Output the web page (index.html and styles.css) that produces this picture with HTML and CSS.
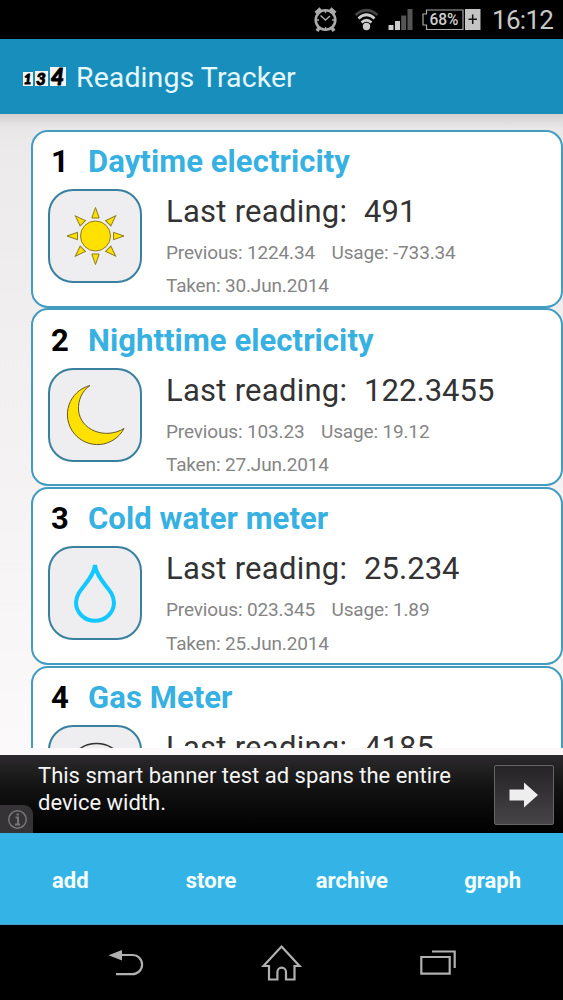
FILE: index.html
```
<!DOCTYPE html>
<html lang="en">

<head>
    <meta charset="UTF-8">
    <meta name="viewport" content="width=device-width, initial-scale=1.0">
    <title>Readings Tracker</title>
    <link rel="stylesheet" href="styles.css">
</head>

<body>

    <div class="status-bar">
        <svg class="status-icons" width="173" height="39" viewBox="0 0 173 39">
            <!-- alarm -->
            <g fill="none" stroke="#aaa">
                <circle cx="15.5" cy="20" r="9.8" stroke-width="2.6"/>
                <path d="M6 13.5L11 9M25 13.5L20 9" stroke-width="4.5"/>
                <path d="M9 28L7 31M22 28l2 3" stroke-width="3.5"/>
                <path d="M10.5 15.5l5 4.5 4.5-4M15.5 11v2M15.5 27v2M7 20h2M22 20h2" stroke-width="1.4"/>
            </g>
            <!-- wifi -->
            <g fill="none" stroke-width="2.7">
                <path d="M45.5 15Q56.5 5.5 67.5 15" stroke="#444"/>
                <path d="M48.5 18.5Q56.5 11 64.5 18.5" stroke="#ccc"/>
                <path d="M51.5 22.5Q56.5 18 61.5 22.5" stroke="#ccc"/>
            </g>
            <circle cx="56.5" cy="26.5" r="3.7" fill="#ccc"/>
            <!-- signal -->
            <path d="M78.5 25h5v5h-5zM85 21h5v9h-5z" fill="#ccc"/>
            <path d="M91.2 15.5h5V30h-5zM97.5 9h5v21h-5z" fill="#555"/>
            <!-- battery -->
            <path d="M116.5 10H153V29.5H116.5V25H113V14h3.5z" fill="none" stroke="#aaa" stroke-width="1.2"/>
            <path d="M155 9h15.5v21H155z" fill="#c4c4c4"/>
            <path d="M158.5 19.3h8.5M162.7 14.5v9.5" stroke="#111" stroke-width="1.5"/>
            <text class="battery-text" x="119.5" y="25" textLength="29" lengthAdjust="spacingAndGlyphs">68%</text>
        </svg>
        <span class="clock">16:12</span>
    </div>

    <header class="app-header">
        <div class="logo">
            <span class="digit digit-one">1</span>
            <span class="digit digit-three">3</span>
            <span class="digit digit-four">4</span>
        </div>
        <h1>Readings Tracker</h1>
    </header>

    <main class="meter-list">
        <section class="meter">
            <h2><span class="number">1</span>Daytime electricity</h2>
            <div class="meter-body">
                <div class="meter-icon">
                    <svg width="92" height="92" viewBox="0 0 92 92">
                        <g fill="#ffe100" stroke="#8c7c20" stroke-width="1">
                            <circle cx="46.5" cy="46" r="15"/>
                            <path id="ray" d="M46.5 17.5l3.7 10.5h-7.4z"/>
                            <use href="#ray" transform="rotate(45 46.5 46)"/>
                            <use href="#ray" transform="rotate(90 46.5 46)"/>
                            <use href="#ray" transform="rotate(135 46.5 46)"/>
                            <use href="#ray" transform="rotate(180 46.5 46)"/>
                            <use href="#ray" transform="rotate(225 46.5 46)"/>
                            <use href="#ray" transform="rotate(270 46.5 46)"/>
                            <use href="#ray" transform="rotate(315 46.5 46)"/>
                        </g>
                    </svg>
                </div>
                <div class="meter-info">
                    <p class="last"><span>Last reading:</span>491</p>
                    <p class="detail"><span>Previous: 1224.34</span>Usage: -733.34</p>
                    <p class="detail">Taken: 30.Jun.2014</p>
                </div>
            </div>
        </section>

        <section class="meter">
            <h2><span class="number">2</span>Nighttime electricity</h2>
            <div class="meter-body">
                <div class="meter-icon">
                    <svg width="92" height="92" viewBox="0 0 92 92">
                        <path d="M41 16.5A30 30 0 1 0 75 59.5C56 71 31 61 29.5 41C29 31 33 22 41 16.5z" fill="#ffe100" stroke="#66582a" stroke-width="1"/>
                    </svg>
                </div>
                <div class="meter-info">
                    <p class="last"><span>Last reading:</span>122.3455</p>
                    <p class="detail"><span>Previous: 103.23</span>Usage: 19.12</p>
                    <p class="detail">Taken: 27.Jun.2014</p>
                </div>
            </div>
        </section>

        <section class="meter">
            <h2><span class="number">3</span>Cold water meter</h2>
            <div class="meter-body">
                <div class="meter-icon">
                    <svg width="92" height="92" viewBox="0 0 92 92">
                        <path d="M46 18C44.5 34 27 42 27 55.5A19 18.3 0 0 0 65 55.5C65 42 47.5 34 46 18z" fill="none" stroke="#12c8ff" stroke-width="4"/>
                    </svg>
                </div>
                <div class="meter-info">
                    <p class="last"><span>Last reading:</span>25.234</p>
                    <p class="detail"><span>Previous: 023.345</span>Usage: 1.89</p>
                    <p class="detail">Taken: 25.Jun.2014</p>
                </div>
            </div>
        </section>

        <section class="meter">
            <h2><span class="number">4</span>Gas Meter</h2>
            <div class="meter-body">
                <div class="meter-icon">
                    <svg width="92" height="92" viewBox="0 0 92 92">
                        <ellipse cx="47.5" cy="38" rx="25" ry="20.5" fill="none" stroke="#333" stroke-width="1.5"/>
                    </svg>
                </div>
                <div class="meter-info">
                    <p class="last"><span>Last reading:</span>4185</p>
                </div>
            </div>
        </section>
    </main>

    <div class="ad">
        <p>This smart banner test ad spans the entire<br>device width.</p>
        <div class="ad-button">
            <svg width="58" height="58" viewBox="0 0 58 58">
                <path d="M14.5 23.5H29V16.5L43 29L29 41.5V34.5H14.5z" fill="#eee"/>
            </svg>
        </div>
        <div class="ad-info">
            <svg width="33" height="28" viewBox="0 0 33 28">
                <circle cx="17.5" cy="14.5" r="8.7" fill="none" stroke="#777" stroke-width="1.5"/>
                <path d="M15.5 12.5h2.5V19M15 19.5h5M16.5 9.5h2.5" fill="none" stroke="#777" stroke-width="2"/>
            </svg>
        </div>
    </div>

    <div class="actions">
        <button>add</button>
        <button>store</button>
        <button>archive</button>
        <button>graph</button>
    </div>

    <div class="nav-bar">
        <svg width="563" height="75" viewBox="0 0 563 75">
            <g fill="none" stroke="#b0b0b0" stroke-width="2.2">
                <path d="M121 30h11.5a9.6 9.6 0 0 1 0 19.2H116"/>
                <path d="M108.5 30.2L122 25v10.5z" fill="#b0b0b0" stroke="none"/>
                <path d="M281.5 21.5L299.5 41H294.5V54.5H286V47a4.3 4.3 0 0 0-8.6 0V54.5H269V41H263.5z"/>
                <path d="M421.3 32h28.4v16.7h-28.4zM432 26.5h22.7V43"/>
            </g>
        </svg>
    </div>

</body>

</html>
```
FILE: styles.css
```
* {
    box-sizing: border-box;
}

body {
    margin: 0;
    width: 563px;
    height: 1000px;
    overflow: hidden;
    display: flex;
    flex-direction: column;
    background-color: #fbf9fa;
    font-family: 'Roboto', sans-serif;
}

h1, h2, p {
    margin: 0;
}

svg {
    display: block;
}

.status-bar {
    flex: none;
    height: 39px;
    display: flex;
    padding-left: 310px;
    background-color: #000;
    color: #c8c8c8;
}

.clock {
    margin-left: 9px;
    font-size: 26px;
    line-height: 40px;
    letter-spacing: -0.7px;
    white-space: nowrap;
}

.battery-text {
    font-size: 16px;
    font-weight: 500;
    fill: #d0d0d0;
}

.app-header {
    flex: none;
    height: 75px;
    display: flex;
    align-items: center;
    padding-left: 23px;
    background-color: #188ebd;
}

.app-header h1 {
    margin: 2px 0 0 10px;
    color: #e4f8ff;
    font-size: 28.5px;
    font-weight: normal;
    letter-spacing: 0.08px;
    white-space: nowrap;
}

.logo {
    width: 43px;
    display: flex;
    gap: 2px;
    align-items: flex-end;
}

.digit {
    background-color: #f4f4f4;
    color: #000;
    font-family: 'Lato', sans-serif;
    font-style: italic;
    font-weight: 900;
    text-align: center;
    text-indent: -1px;
    -webkit-text-stroke: 0.8px #000;
}

.digit-one {
    width: 10px;
    height: 14px;
    font-size: 14px;
    line-height: 14px;
}

.digit-three {
    width: 13px;
    height: 15px;
    font-size: 17px;
    line-height: 15px;
}

.digit-four {
    width: 16px;
    height: 19px;
    font-size: 23px;
    line-height: 19px;
}

.meter-list {
    flex: none;
    height: 634px;
    padding: 15.5px 0 0 31px;
    overflow: hidden;
    background: linear-gradient(#d2d0d1, #e9e7e8 14px, #eceaeb 40px, #fbf9fa);
}

.meter {
    height: 178px;
    margin-bottom: 0.7px;
    padding: 11.5px 0 0 15px;
    border: 2px solid #419cc0;
    border-radius: 17px;
    background-color: #fff;
}

.meter h2 {
    display: flex;
    height: 40px;
    line-height: 38px;
    color: #37b0e2;
    font-size: 31px;
    letter-spacing: 0.08px;
    white-space: nowrap;
}

.number {
    width: 40px;
    padding-left: 3px;
    color: #000;
}

.meter-body {
    display: flex;
    gap: 24px;
    margin-top: 6px;
}

.meter-icon {
    flex: none;
    width: 94px;
    height: 94px;
    border: 2px solid #38809e;
    border-radius: 25px;
    background-color: #eeedef;
}

.meter-icon svg {
    margin: -1px;
}

.meter-info {
    white-space: nowrap;
    color: #858585;
    font-size: 19px;
    letter-spacing: -0.15px;
}

.last {
    height: 46px;
    line-height: 46px;
    color: #333;
    font-size: 31px;
    letter-spacing: 0.05px;
}

.last span {
    display: inline-block;
    width: 198px;
    letter-spacing: 0.25px;
}

.detail {
    height: 33.3px;
    line-height: 35.5px;
}

.detail span {
    margin-right: 16.5px;
}

.ad {
    position: relative;
    flex: none;
    display: flex;
    justify-content: space-between;
    height: 78px;
    margin-top: 7px;
    padding: 8px 9px 0 38px;
    background: linear-gradient(#2c2a2c, #111 45%, #000);
    color: #f4f4f4;
    font-size: 22px;
    line-height: 26.5px;
    white-space: nowrap;
}

.ad-button {
    width: 60px;
    height: 60px;
    margin-top: 2px;
    border: 1.5px solid #656565;
    border-radius: 2px;
    background: linear-gradient(#252325, #464446);
}

.ad-info {
    position: absolute;
    left: 0;
    bottom: 0;
    border-top-right-radius: 9px;
    background-color: #353335;
}

.actions {
    flex: none;
    height: 92px;
    display: flex;
    background-color: #34b4e6;
    border-bottom: 1px solid #4d9cba;
}

.actions button {
    flex: 1;
    padding: 3px 0 0;
    border: none;
    background: none;
    color: #f6ffff;
    font-family: 'Roboto', sans-serif;
    font-size: 22px;
    font-weight: bold;
}

.nav-bar {
    flex: none;
    height: 75px;
    background-color: #000;
}
```
